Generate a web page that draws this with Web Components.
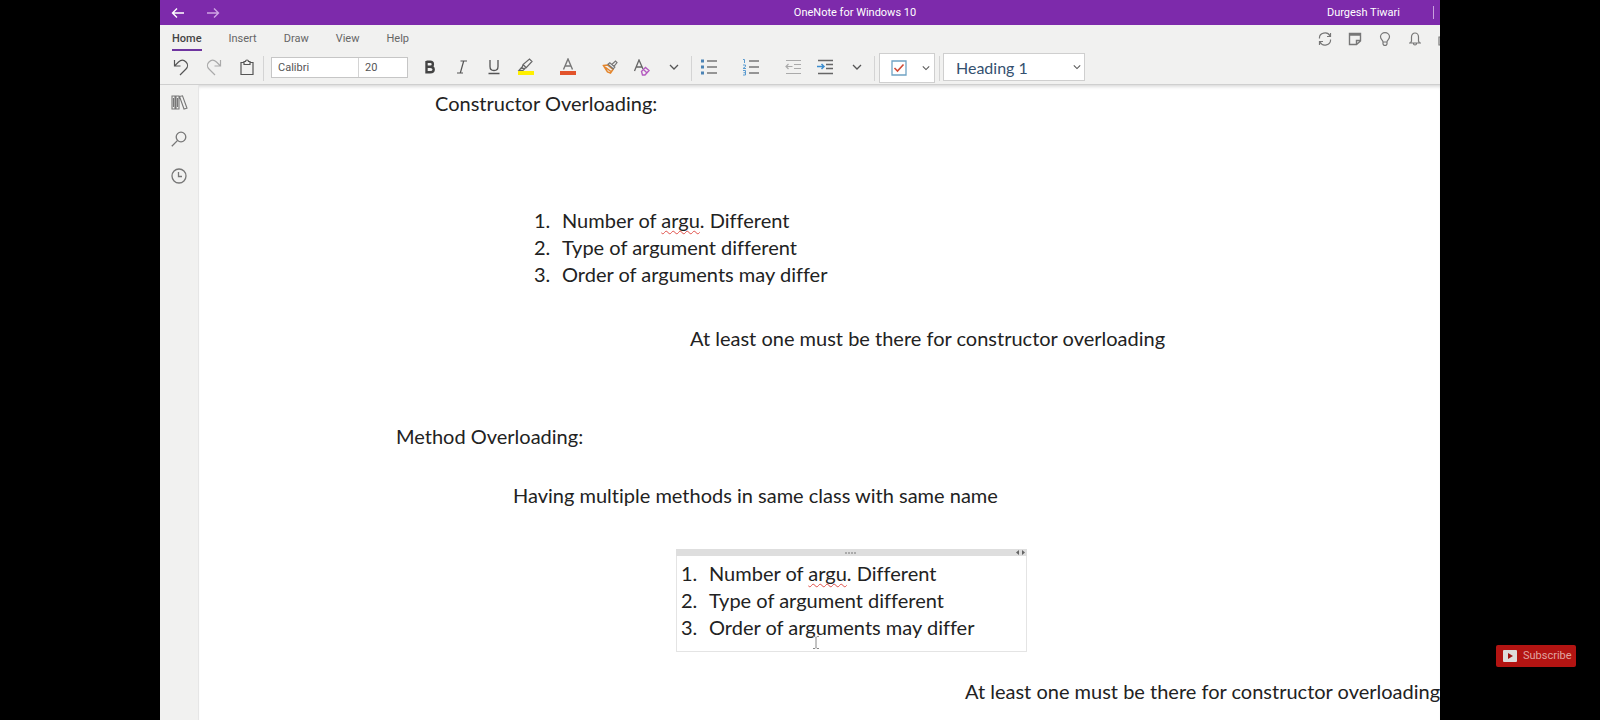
<!DOCTYPE html>
<html lang="en">
<head>
<meta charset="utf-8">
<title>OneNote for Windows 10</title>
<style>
html, body { margin: 0; min-height: 100%; background: #000; }
body { font-family: Roboto, "Noto Sans", sans-serif; font-size: 11px; color: #444; overflow: hidden; }
</style>
</head>
<body>
<video-stage>
  <note-app></note-app>
  <subscribe-button slot="end">Subscribe</subscribe-button>
</video-stage>
<script>
const define = (name, html) => customElements.define(name, class extends HTMLElement {
  constructor() {
    super();
    const t = document.createElement('template');
    t.innerHTML = html;
    this.attachShadow({ mode: 'open' }).append(t.content.cloneNode(true));
  }
});

define('video-stage', `
<style>
:host { display: grid; grid-template-columns: 1fr 8fr 1fr; min-height: 100vh; background: #000; }
.main { grid-column: 2; min-width: 0; display: grid; overflow: hidden; }
.end { display: flex; flex-direction: column; justify-content: flex-end; align-items: flex-end; padding: 0 24px 53px 0; }
</style>
<div class="main"><slot></slot></div>
<div class="end"><slot name="end"></slot></div>`);

define('subscribe-button', `
<style>
:host { display: block; }
button { display: flex; align-items: center; gap: 6px; width: 80px; height: 22px; padding: 0 7px; border: 0; border-radius: 2px; background: #b31412; color: #e0a5a0; font: 11px/22px Roboto, Arial, sans-serif; }
svg { flex: none; }
</style>
<button type="button"><svg width="14" height="12" viewBox="0 0 14 12"><rect width="14" height="12" rx="1" fill="#ddd"/><path d="M5 3l5 3-5 3z" fill="#a01412"/></svg><slot></slot></button>`);

define('title-bar', `
<style>
:host { display: block; background: #7d2aab; color: #fff; }
.bar { display: grid; grid-template-columns: 1fr auto 1fr; align-items: center; height: 25px; width: calc(100% + 110px); }
nav { display: flex; gap: 3px; padding-left: 2px; }
button { width: 32px; height: 24px; padding: 0; border: 0; background: none; color: #fff; display: grid; place-items: center; }
button + button { color: #cfa5e4; }
.user { display: flex; justify-content: flex-end; align-items: center; gap: 33px; padding-right: 116px; }
i { width: 1px; height: 13px; background: #c9a0dd; }
</style>
<div class="bar">
<nav>
<button type="button" aria-label="Back"><svg width="14" height="12" viewBox="0 0 14 12" fill="none" stroke="currentColor" stroke-width="1.4"><path d="M13 6H1.5M6 1.5L1.5 6 6 10.500"/></svg></button>
<button type="button" aria-label="Forward"><svg width="14" height="12" viewBox="0 0 14 12" fill="none" stroke="currentColor" stroke-width="1.4"><path d="M1 6h11.500M8 1.500L12.500 6 8 10.500"/></svg></button>
</nav>
<span>OneNote for Windows 10</span>
<div class="user"><span>Durgesh Tiwari</span><i></i></div>
</div>`);

define('tool-button', `
<style>
:host { display: block; flex: none; width: 32px; }
button { display: grid; place-items: center; width: 100%; height: 28px; padding: 0; border: 0; background: none; color: inherit; }
</style>
<button type="button"><slot></slot></button>`);

define('ribbon-tabs', `
<style>
:host { display: flex; height: 28px; }
nav { display: flex; gap: 27px; padding-left: 12px; }
a { color: #666; text-decoration: none; line-height: 27px; height: 24px; border-bottom: 2px solid transparent; }
a.on { color: #444; font-weight: 500; border-color: #6f35a0; }
.status { display: flex; margin: 0 -20px 0 auto; color: #777; }
tool-button { width: 30px; }
</style>
<nav><a class="on" href="#home">Home</a><a href="#insert">Insert</a><a href="#draw">Draw</a><a href="#view">View</a><a href="#help">Help</a></nav>
<div class="status">
<tool-button title="Sync"><svg width="14" height="14" viewBox="0 0 14 14" fill="none" stroke="currentColor" stroke-width="1.200"><path d="M1.500 6.500A5.500 5 0 0 1 12 4M12.500 7.500A5.500 5 0 0 1 2 10M12.500 1v3.500H9M1.500 13V9.500H5"/></svg></tool-button>
<tool-button title="Sticky notes"><svg width="14" height="14" viewBox="0 0 14 14" fill="none" stroke="currentColor" stroke-width="1.400"><path d="M1.500 1.500h11v7.500l-4 3.500h-7zM12.500 8.500h-4v4M1.500 3h11"/></svg></tool-button>
<tool-button title="Tell me"><svg width="12" height="14" viewBox="0 0 12 14" fill="none" stroke="currentColor" stroke-width="1.200"><path d="M4 10C4 8 1.500 7.500 1.500 4.800a4.500 4.200 0 0 1 9 0C10.500 7.500 8 8 8 10zM4 10v2l1 1.300h2L8 12v-2"/></svg></tool-button>
<tool-button title="Notifications"><svg width="14" height="14" viewBox="0 0 14 14" fill="none" stroke="currentColor" stroke-width="1.200"><path d="M1 11h12M2.500 11L3.500 9V5a3.500 4 0 0 1 7 0v4l1 2M5.500 11.500a1.500 1.500 0 0 0 3 0"/></svg></tool-button>
<tool-button title="Share"><svg width="14" height="14" viewBox="0 0 14 14" fill="none" stroke="currentColor" stroke-width="1.200"><path d="M3 5H1v8h10V9M3 10c0-4 3-6 8-6M8.500 1.500L12 4 8.500 7"/></svg></tool-button>
</div>`);

const chevron = '<svg width="10" height="6" viewBox="0 0 10 6" fill="none" stroke="#555" stroke-width="1.300"><path d="M1 1l4 4 4-4"/></svg>';

define('ribbon-tools', `
<style>
:host { display: flex; height: 30px; padding-bottom: 1px; align-items: flex-start; color: #555; }
.group { display: flex; align-items: center; padding: 0 1px; }
.group.first { gap: 1px; padding: 0 0 0 5px; }
.gap { margin-left: 10px; }
.sep { flex: none; width: 1px; height: 25px; margin-top: 3px; background: #d4d4d4; }
.fonts { display: flex; flex: none; margin: 4px 5px 0 7px; background: #fff; border: 1px solid #c6c6c6; }
input { box-sizing: border-box; height: 19px; padding: 0 6px; border: 0; outline: 0; background: none; font: inherit; color: #555; }
.face { width: 86px; }
.size { width: 49px; border-left: 1px solid #d4d4d4; }
.dim { color: #aaa; }
.tag { box-sizing: border-box; flex: none; display: flex; align-items: center; width: 56px; height: 30px; margin: 0 4px; padding: 0; background: #fff; border: 1px solid #cfcfcf; }
.tag tool-button:first-child { width: 38px; }
.tag tool-button:last-child { width: 16px; }
.style { flex: none; display: grid; align-items: center; margin-left: 3px; background: #fff; border: 1px solid #cfcfcf; }
.style > * { grid-area: 1 / 1; }
.style svg { justify-self: end; margin-right: 3px; pointer-events: none; }
select { appearance: none; width: 140px; height: 26px; border: 0; background: none; padding: 0 12px; font-size: 16px; font-family: Lato, Carlito, sans-serif; color: #34506f; }
</style>
<div class="group first">
<tool-button title="Undo"><svg width="16" height="17" viewBox="0 0 16 17" fill="none" stroke="currentColor" stroke-width="1.200"><path d="M1.500 1v6h6M1.500 7L5.500 3C8 .8 11 1 13 3s2 5 0 7l-6 6"/></svg></tool-button>
<tool-button title="Redo" class="dim"><svg width="16" height="17" viewBox="0 0 16 17" fill="none" stroke="currentColor" stroke-width="1.200"><path d="M14.500 1v6h-6M14.500 7l-4-4C8 .8 5 1 3 3s-2 5 0 7l6 6"/></svg></tool-button>
<tool-button title="Paste"><svg width="14" height="17" viewBox="0 0 14 17" fill="none" stroke="currentColor" stroke-width="1.200"><path d="M4 3.500H1v12h12v-12h-3M4 5.500v-3h1.500a1.500 1.500 0 0 1 3 0H10v3z"/></svg></tool-button>
</div>
<span class="sep"></span>
<div class="fonts"><input class="face" aria-label="Font" value="Calibri"><input class="size" aria-label="Font size" value="20"></div>
<div class="group">
<tool-button title="Bold"><svg width="12" height="14" viewBox="0 0 12 14" fill="none" stroke="#444" stroke-width="2.400"><path d="M2.500 1.700h3.700q2.700 0 2.700 2.500T6.200 6.700H2.500M6.200 6.700q3.500 0 3.500 2.800T6.200 12.300H2.500V1"/></svg></tool-button>
<tool-button title="Italic"><svg width="12" height="14" viewBox="0 0 12 14" fill="none" stroke="currentColor" stroke-width="1.200"><path d="M4.500 1H11M1 13h6M7.700 1L4.300 13"/></svg></tool-button>
<tool-button title="Underline"><svg width="12" height="16" viewBox="0 0 12 16" fill="none" stroke="currentColor" stroke-width="1.300"><path d="M2 1v6.500Q2 11.500 6 11.500t4-4V1M.5 14.500h11"/></svg></tool-button>
<tool-button title="Highlight"><svg width="18" height="18" viewBox="0 0 18 18" fill="none" stroke="#666" stroke-width="1.200"><path d="M5 10l1-3.500L12.500 1 15 3.500 9 10l-4 .5zM6 6.500L9.500 10M5 9l-3 3.500h4l2-2"/><path d="M1 13h16v4H1z" fill="#fff000" stroke="none"/></svg></tool-button>
<tool-button title="Font color" class="gap"><svg width="18" height="18" viewBox="0 0 18 18" fill="none" stroke="#777" stroke-width="1.400"><path d="M4.500 11.500L9 1l4.500 10.500M6 8h6"/><path d="M1 13h16v4H1z" fill="#e2532b" stroke="none"/></svg></tool-button>
<tool-button title="Format painter" class="gap"><svg width="16" height="14" viewBox="0 0 16 14" fill="none"><path d="M1.500 5.500l4-.5 5.500 4.500L8.500 13l-3-1-1.500-2.500zM3 7l6 4.500" stroke="#e4862d" stroke-width="1.500"/><path d="M6 4.200l1.800-1.400 5 4.200-1.600 1.800zM9.800 4.500L13.500 1 15 2.500l-3 3.800" stroke="#777" stroke-width="1.200"/></svg></tool-button>
<tool-button title="Clear formatting"><svg width="18" height="17" viewBox="0 0 18 17" fill="none" stroke="#666" stroke-width="1.300"><path d="M1.500 12L6 1l4 9M3 8h6"/><path d="M8.500 12.500l4-4 3.500 3-4 4.500H9.500zM10.500 10.500l3.500 3.500" stroke="#b45bc0" stroke-width="1.400"/></svg></tool-button>
<tool-button title="More font options">${chevron}</tool-button>
</div>
<span class="sep"></span>
<div class="group">
<tool-button title="Bullets"><svg width="18" height="16" viewBox="0 0 18 16" fill="none" stroke="#777" stroke-width="1.300"><path d="M7 2h10M7 8h10M7 14h10"/><path d="M1 .5h3v3H1zM1 6.500h3v3H1zM1 12.500h3v3H1z" fill="#4b83b5" stroke="none"/></svg></tool-button>
<tool-button title="Numbering" class="gap"><svg width="18" height="18" viewBox="0 0 18 18" fill="none" stroke="#777" stroke-width="1.300"><path d="M7 3h10M7 9h10M7 15h10"/><path d="M1 1.500h1.500V5M1 7h2.500v1.500L1 10.500h3M1 12.500h2.500V17H1M1.500 14.700h2" stroke="#5a9bd0" stroke-width="1"/></svg></tool-button>
<tool-button title="Decrease indent" class="gap dim"><svg width="16" height="16" viewBox="0 0 16 16" fill="none" stroke="currentColor" stroke-width="1.200"><path d="M1 1.500h15M9 5.500h7M9 9.500h7M1 14.500h15M7.500 7.500H1M3.500 5L1 7.500 3.500 10"/></svg></tool-button>
<tool-button title="Increase indent"><svg width="16" height="16" viewBox="0 0 16 16" fill="none" stroke="#666" stroke-width="1.300"><path d="M1 1.500h15M9 5.500h7M9 9.500h7M1 14.500h15"/><path d="M0 7.500h7M4.500 5L7 7.500 4.500 10" stroke="#3d8ed0" stroke-width="1.500"/></svg></tool-button>
<tool-button title="More paragraph options">${chevron}</tool-button>
</div>
<span class="sep"></span>
<div class="tag">
<tool-button title="To Do tag"><svg width="16" height="16" viewBox="0 0 16 16" fill="none"><path d="M1 1h14v14H1z" stroke="#6fa3c4" stroke-width="1.300"/><path d="M3.500 8l3 3 6-6.500" stroke="#d04a35" stroke-width="1.600"/></svg></tool-button>
<tool-button title="More tags">${chevron.replace('width="10"', 'width="8"')}</tool-button>
</div>
<span class="sep"></span>
<div class="style"><select aria-label="Style"><option>Heading 1</option><option>Heading 2</option><option>Normal</option></select>${chevron.replace('width="10"', 'width="8"')}</div>`);

define('side-rail', `
<style>
:host { display: flex; flex-direction: column; gap: 9px; padding: 3px 3px 0; background: #f1f1f0; border-right: 1px solid #e6e6e6; color: #777; }
</style>
<tool-button title="Notebooks"><svg width="17" height="15" viewBox="0 0 17 15" fill="none" stroke="currentColor" stroke-width="1.100"><path d="M1 1h3v13H1zM5 1h3v13H5zM8.500 1.500l3-.7L16 13.200l-3 .8zM2.500 3v9M6.500 3v9"/></svg></tool-button>
<tool-button title="Search"><svg width="16" height="16" viewBox="0 0 16 16" fill="none" stroke="currentColor" stroke-width="1.300"><circle cx="10" cy="6" r="4.800"/><path d="M6.600 9.400L.8 15.200"/></svg></tool-button>
<tool-button title="Recent notes"><svg width="16" height="16" viewBox="0 0 16 16" fill="none" stroke="currentColor" stroke-width="1.300"><circle cx="8" cy="8" r="7"/><path d="M7.500 4v4.500H11"/></svg></tool-button>`);

/* A free-floating note container; x and y are its place on the page canvas. */
customElements.define('note-box', class extends HTMLElement {
  constructor() {
    super();
    this.attachShadow({ mode: 'open' }).innerHTML = `
<style>
:host { position: absolute; display: block; box-sizing: border-box; white-space: nowrap; }
.grip { display: none; }
:host([active]) { width: 351px; height: 103px; border: 1px solid #e4e4e4; padding: 0 4px; }
:host([active]) .grip { display: grid; grid-template-columns: 1fr auto 1fr; align-items: center; justify-items: end; height: 7px; margin: -1px -5px 4px; padding-right: 2px; background: #dedede; }
.grip svg:first-child { grid-column: 2; }
</style>
<div class="grip"><svg width="12" height="2" viewBox="0 0 12 2" fill="#aaa"><path d="M0 0h2v2H0zM3 0h2v2H3zM6 0h2v2H6zM9 0h2v2H9z"/></svg><svg width="9" height="5" viewBox="0 0 9 5" fill="#666"><path d="M3 0v5L0 2.500zM6 0v5l3-2.500z"/></svg></div>
<slot></slot>`;
  }
  connectedCallback() {
    this.style.left = this.getAttribute('x') + 'px';
    this.style.top = this.getAttribute('y') + 'px';
  }
});

define('argument-list', `
<style>
:host { display: block; }
ol { margin: 0; padding: 0; list-style: none; }
li { display: flex; }
.n { width: 28px; }
u { text-decoration: underline wavy #e0504a 1px; text-underline-offset: 2px; text-decoration-skip-ink: none; }
</style>
<ol>
<li><span class="n">1.</span><span>Number of <u>argu</u>. Different</span></li>
<li><span class="n">2.</span><span>Type of argument different</span></li>
<li><span class="n">3.</span><span>Order of arguments may differ</span></li>
</ol>`);

define('note-page', `
<style>
:host { display: block; position: relative; overflow: hidden; background: #fff; color: #222; font: 20px/27px Lato, Carlito, sans-serif; font-variant-ligatures: none; box-shadow: inset 0 4px 4px -3px #ccc; }
.caret { position: absolute; left: 613px; top: 551px; }
</style>
<note-box x="236" y="5">Constructor Overloading:</note-box>
<note-box x="335" y="122"><argument-list></argument-list></note-box>
<note-box x="491" y="240">At least one must be there for constructor overloading</note-box>
<note-box x="197" y="338">Method Overloading:</note-box>
<note-box x="314" y="397">Having multiple methods in same class with same name</note-box>
<note-box x="477" y="464" active><argument-list></argument-list></note-box>
<note-box x="766" y="593">At least one must be there for constructor overloading</note-box>
<svg class="caret" width="8" height="13" viewBox="0 0 8 13" fill="none" stroke="#888"><path d="M1 .5h2l1 1 1-1h2M4 1.500v10M1 12.500h2l1-1 1 1h2"/></svg>`);

define('note-app', `
<style>
:host { display: grid; grid-template-rows: auto auto 1fr; min-width: 0; overflow: hidden; background: #fff; }
header { background: #f1f1f0; border-bottom: 1px solid #cfcfcf; min-width: 0; }
.work { display: grid; grid-template-columns: auto 1fr; min-width: 0; }
</style>
<title-bar></title-bar>
<header><ribbon-tabs></ribbon-tabs><ribbon-tools></ribbon-tools></header>
<div class="work"><side-rail></side-rail><note-page></note-page></div>`);
</script>
</body>
</html>
